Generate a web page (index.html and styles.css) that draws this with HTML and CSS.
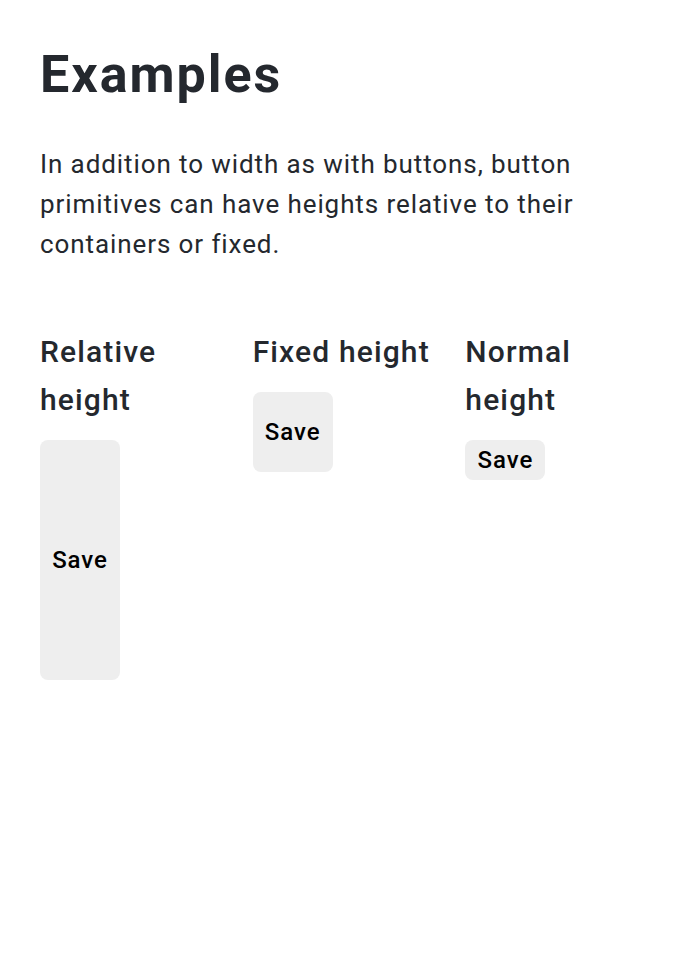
FILE: index.html
```html
<!DOCTYPE html>
<html>
<head>
<meta charset="utf-8">
<link rel="stylesheet" href="styles.css">
</head>
<body>
<main class="page">
  <h1 class="title">Examples</h1>
  <p class="lead">In addition to width as with buttons, button primitives can have heights relative to their containers or fixed.</p>
  <div class="examples">
    <section class="example">
      <h2 class="example-title">Relative height</h2>
      <div class="relative-box">
        <button class="btn btn-fill">Save</button>
      </div>
    </section>
    <section class="example">
      <h2 class="example-title">Fixed height</h2>
      <div>
        <button class="btn btn-fixed">Save</button>
      </div>
    </section>
    <section class="example">
      <h2 class="example-title">Normal height</h2>
      <div>
        <button class="btn btn-normal">Save</button>
      </div>
    </section>
  </div>
</main>
</body>
</html>
```

FILE: styles.css
```css
html, body {
  margin: 0;
  padding: 0;
  background: #ffffff;
}
body {
  font-family: Roboto, "Noto Sans", sans-serif;
  color: #24282e;
}
.page {
  padding: 44px 40px 40px;
}
.title {
  margin: 0;
  font-size: 52px;
  line-height: 62px;
  font-weight: 700;
  letter-spacing: 0.038em;
}
.lead {
  margin: 38px 0 0;
  font-size: 26px;
  line-height: 40px;
  font-weight: 400;
  letter-spacing: 0.035em;
}
.examples {
  margin-top: 64px;
  display: grid;
  grid-template-columns: repeat(3, 1fr);
  column-gap: 32px;
  align-items: start;
}
.example-title {
  margin: 0 0 16px;
  font-size: 30px;
  line-height: 48px;
  font-weight: 500;
  letter-spacing: 0.038em;
}
.relative-box {
  height: 240px;
}
.btn {
  display: flex;
  align-items: center;
  justify-content: center;
  width: 80px;
  padding: 0;
  border: none;
  border-radius: 8px;
  background: #eeeeee;
  color: #000000;
  font-family: Roboto, "Noto Sans", sans-serif;
  font-size: 24px;
  font-weight: 500;
  letter-spacing: 0.04em;
}
.btn-fill {
  height: 100%;
}
.btn-fixed {
  height: 80px;
}
.btn-normal {
  height: 40px;
}
```
